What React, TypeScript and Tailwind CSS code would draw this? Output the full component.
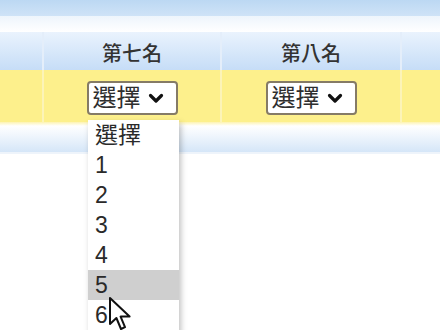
import React from "react";

const font = { fontFamily: '"Liberation Sans", "Noto Sans CJK TC", sans-serif' };

function Chevron() {
  return (
    <svg width="16" height="11" viewBox="0 0 16 11" className="shrink-0">
      <path d="M2.5 2.5 L8 8 L13.5 2.5" fill="none" stroke="#111" strokeWidth="3.2" strokeLinecap="round" strokeLinejoin="round" />
    </svg>
  );
}

function SelectBox() {
  return (
    <div className="flex items-center gap-[7px] h-[34px] w-[91px] pl-[4px] pr-[6px] bg-white border-[2px] border-[#857b66] rounded-[4px] text-[24px] leading-none text-[#2e2e2e]">
      <span>選擇</span>
      <Chevron />
    </div>
  );
}

export default function App() {
  const items = ["選擇", "1", "2", "3", "4", "5", "6"];
  return (
    <div className="relative w-[440px] h-[330px] overflow-hidden bg-white" style={font}>
      <div className="h-[16px] bg-gradient-to-b from-[#bcd8f3] to-[#cfe3f7]" />
      <div className="h-[16px] bg-gradient-to-b from-[#eef5fc] to-white" />
      {/* header row */}
      <div className="grid grid-cols-[44px_178px_180px_38px] h-[38px] bg-gradient-to-b from-[#eaf3fd] to-[#c6ddf7]">
        <div className="border-r-[2px] border-[#e4eefa]" />
        <div className="flex items-center justify-center pt-[6px] text-[20px] font-medium text-[#333] border-r-[2px] border-[#e4eefa]">第七名</div>
        <div className="flex items-center justify-center pt-[6px] text-[20px] font-medium text-[#333] border-r-[2px] border-[#e4eefa]">第八名</div>
        <div />
      </div>
      {/* yellow row */}
      <div className="grid grid-cols-[44px_178px_180px_38px] h-[52px] bg-[#fdf08c]">
        <div className="border-r-[2px] border-[#fcf4b8]" />
        <div className="flex items-start justify-center pt-[11px] border-r-[2px] border-[#fcf4b8]">
          <SelectBox />
        </div>
        <div className="flex items-start justify-center pt-[11px] border-r-[2px] border-[#fcf4b8]">
          <SelectBox />
        </div>
        <div />
      </div>
      <div className="h-[4px] bg-gradient-to-b from-[#fdf3b0] to-white" />
      <div className="h-[26px] bg-gradient-to-b from-white to-[#d5e6f8]" />
      <div className="h-[2px] bg-[#eef4fb]" />

      {/* dropdown list */}
      <div className="absolute left-[88px] top-[120px] w-[91px] h-[215px] bg-white shadow-[2px_3px_6px_rgba(0,0,0,0.25)] flex flex-col">
        {items.map((it) => (
          <div
            key={it}
            className={
              it === "5"
                ? "h-[30px] flex items-center pl-[7px] text-[23px] text-[#2a2a2a] bg-[#cfcfcf]"
                : "h-[30px] flex items-center pl-[7px] text-[23px] text-[#2a2a2a]"
            }
          >
            {it}
          </div>
        ))}
      </div>

      {/* cursor */}
      <svg className="absolute left-[108px] top-[296px]" width="26" height="36" viewBox="0 0 13 18">
        <path d="M1 1 L1 14 L4.2 11 L6.5 16.5 L8.5 15.6 L6.3 10.3 L10.8 10.3 Z" fill="white" stroke="#111" strokeWidth="1" strokeLinejoin="round" />
      </svg>
    </div>
  );
}
